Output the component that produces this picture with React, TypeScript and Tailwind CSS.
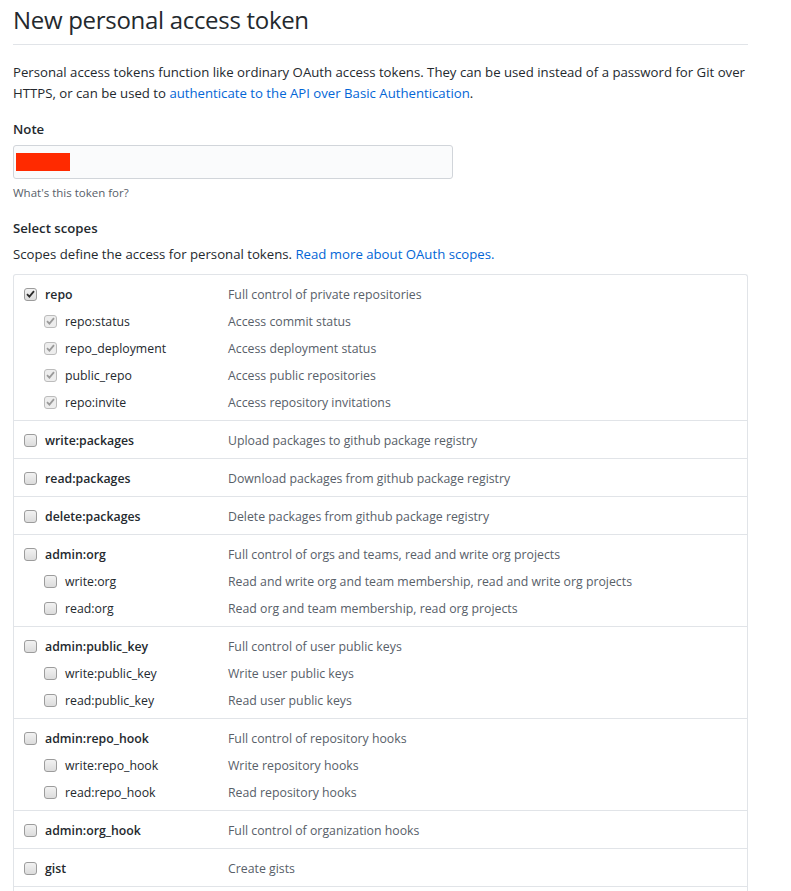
import React from "react";

type Scope = {
  name: string;
  desc: string;
  checked?: boolean;
  subs?: { name: string; desc: string; checked?: boolean }[];
};

const scopes: Scope[] = [
  {
    name: "repo",
    desc: "Full control of private repositories",
    checked: true,
    subs: [
      { name: "repo:status", desc: "Access commit status", checked: true },
      { name: "repo_deployment", desc: "Access deployment status", checked: true },
      { name: "public_repo", desc: "Access public repositories", checked: true },
      { name: "repo:invite", desc: "Access repository invitations", checked: true },
    ],
  },
  { name: "write:packages", desc: "Upload packages to github package registry" },
  { name: "read:packages", desc: "Download packages from github package registry" },
  { name: "delete:packages", desc: "Delete packages from github package registry" },
  {
    name: "admin:org",
    desc: "Full control of orgs and teams, read and write org projects",
    subs: [
      { name: "write:org", desc: "Read and write org and team membership, read and write org projects" },
      { name: "read:org", desc: "Read org and team membership, read org projects" },
    ],
  },
  {
    name: "admin:public_key",
    desc: "Full control of user public keys",
    subs: [
      { name: "write:public_key", desc: "Write user public keys" },
      { name: "read:public_key", desc: "Read user public keys" },
    ],
  },
  {
    name: "admin:repo_hook",
    desc: "Full control of repository hooks",
    subs: [
      { name: "write:repo_hook", desc: "Write repository hooks" },
      { name: "read:repo_hook", desc: "Read repository hooks" },
    ],
  },
  { name: "admin:org_hook", desc: "Full control of organization hooks" },
  { name: "gist", desc: "Create gists" },
];

const Box = ({ checked, disabled }: { checked?: boolean; disabled?: boolean }) => (
  <span
    className={`mt-[-2px] flex h-[13px] w-[13px] shrink-0 items-center justify-center rounded-[3px] border ${
      disabled ? "border-[#bcbcbc] bg-[#ededed]" : "border-[#9c9c9c] bg-gradient-to-b from-[#f2f2f2] to-[#dcdcdc]"
    }`}
  >
    {checked && (
      <svg width="9" height="8" viewBox="0 0 9 8">
        <path
          d="M1 4.2 L3.4 6.6 L8 1.2"
          fill="none"
          stroke={disabled ? "#9a9a9a" : "#2b2b2b"}
          strokeWidth="1.8"
        />
      </svg>
    )}
  </span>
);

export default function App() {
  return (
    <div className="min-h-screen bg-white text-[14px] text-[#24292e]" style={{ fontFamily: '"Open Sans", "Noto Sans", sans-serif' }}>
      <div className="ml-[13px] w-[735px]">
        <h1 className="border-b border-[#e1e4e8] pt-[4px] pb-[8px] text-[24px] leading-[32px] font-normal tracking-[-0.3px]">
          New personal access token
        </h1>

        <p className="mt-[17px] text-[13.2px] leading-[21px] whitespace-nowrap">
          Personal access tokens function like ordinary OAuth access tokens. They can be used instead of a password for Git over
          <br />
          HTTPS, or can be used to <a className="text-[#0366d6]">authenticate to the API over Basic Authentication</a>.
        </p>

        <div className="mt-[15px] text-[13.2px] leading-[21px] font-semibold">Note</div>
        <div className="mt-[5px] flex h-[34px] w-[440px] items-center rounded-[3px] border border-[#d1d5da] bg-[#fafbfc] px-[2px]">
          <span className="h-[18px] w-[54px] bg-[#ff2a00]" />
        </div>
        <div className="mt-[6px] text-[11.5px] leading-[16px] text-[#586069]">What's this token for?</div>

        <div className="mt-[17px] text-[13.2px] leading-[21px] font-semibold">Select scopes</div>
        <p className="mt-[5px] text-[13.2px] leading-[21px]">
          Scopes define the access for personal tokens. <a className="text-[#0366d6]">Read more about OAuth scopes.</a>
        </p>

        <div className="mt-[9px] rounded-t-[3px] border border-b-0 border-[#e1e4e8]">
          {scopes.map((s) => (
            <div key={s.name} className="border-b border-[#e1e4e8] px-[10px] pt-[10px] pb-[7px] text-[12.3px] leading-[20px]">
              <div className="flex items-center">
                <div className="flex w-[204px] items-center gap-[8px]">
                  <Box checked={s.checked} />
                  <span className="font-semibold">{s.name}</span>
                </div>
                <span className="text-[#586069]">{s.desc}</span>
              </div>
              {s.subs?.map((sub) => (
                <div key={sub.name} className="mt-[7px] flex items-center">
                  <div className="flex w-[204px] items-center gap-[8px] pl-[20px]">
                    <Box checked={sub.checked} disabled={s.checked} />
                    <span>{sub.name}</span>
                  </div>
                  <span className="text-[#586069]">{sub.desc}</span>
                </div>
              ))}
            </div>
          ))}
          <div className="h-[20px]" />
        </div>
      </div>
    </div>
  );
}
